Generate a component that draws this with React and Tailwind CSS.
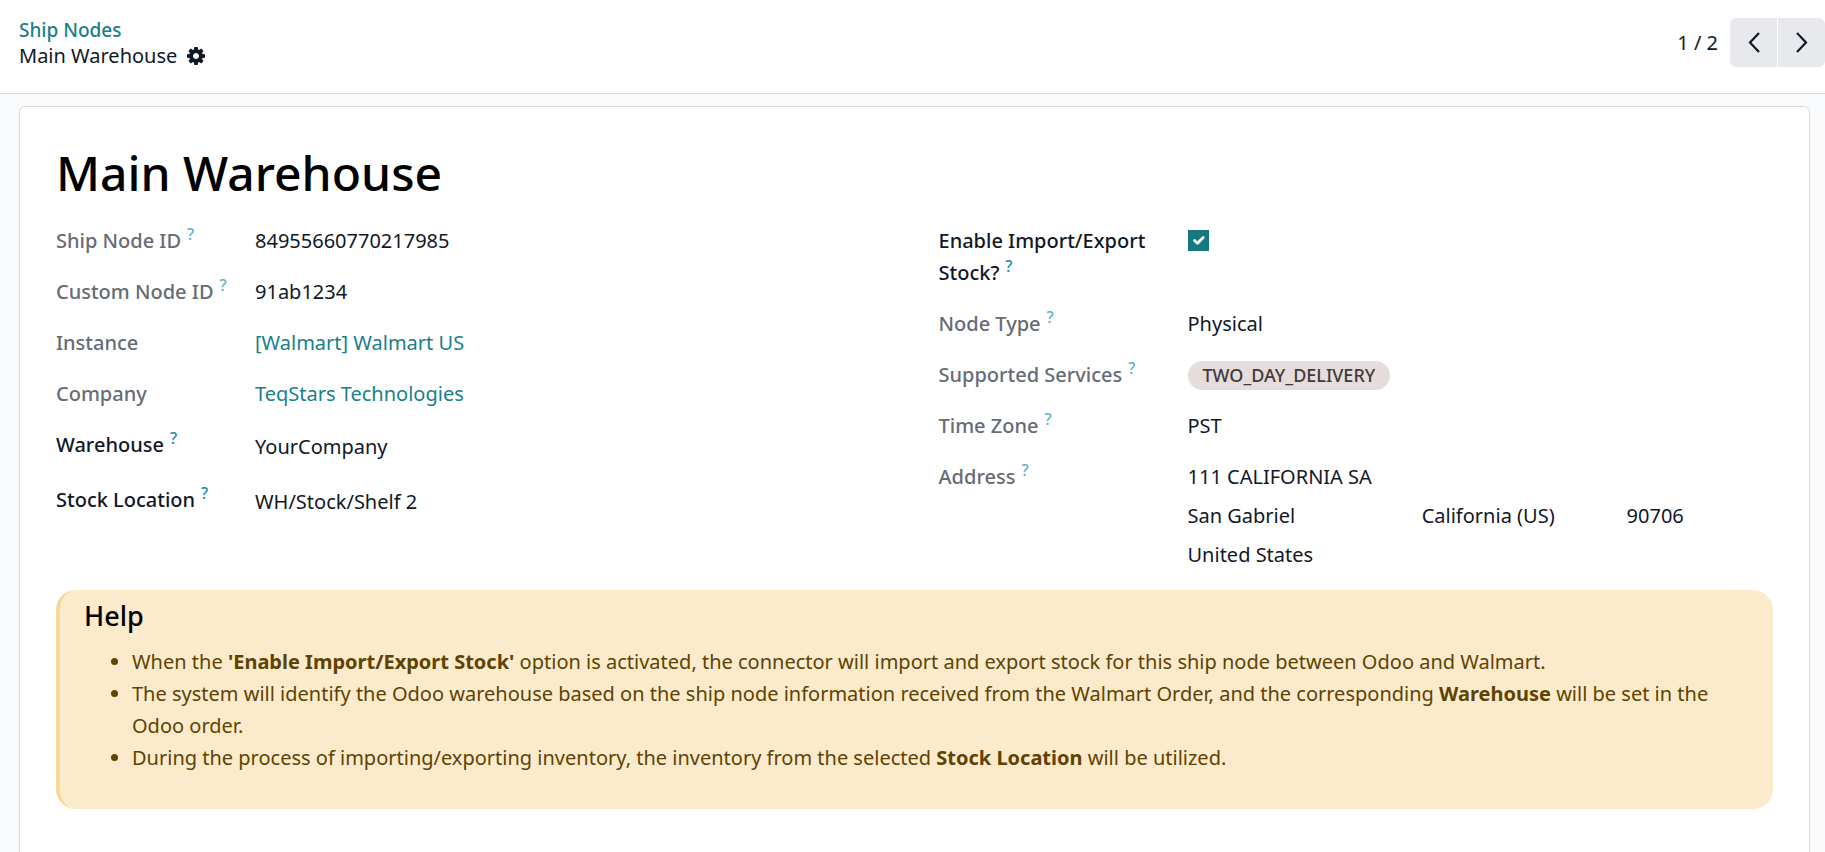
import React, { useState } from "react";

const GearIcon = () => (
  <svg viewBox="0 128 1536 1536" className="w-[18px] h-[18px]" fill="currentColor" aria-hidden="true">
    <path d="M1024 896q0-106-75-181t-181-75-181 75-75 181 75 181 181 75 181-75 75-181zm512-109v222q0 12-8 23t-20 13l-185 28q-19 54-39 91 35 50 107 138 10 12 10 25t-9 23q-27 37-99 108t-94 71q-12 0-26-9l-138-108q-44 23-91 38-16 136-29 186-7 28-36 28h-222q-14 0-24.5-8.5t-11.5-21.5l-28-184q-49-16-90-37l-141 107q-10 9-25 9-14 0-25-11-126-114-165-168-7-10-7-23 0-12 8-23 15-21 51-66.5t54-70.5q-27-50-41-99l-183-27q-13-2-21-12.5t-8-23.5v-222q0-12 8-23t19-13l186-28q14-46 39-92-40-57-107-138-10-12-10-24 0-10 9-23 26-36 98.5-107.5t94.5-71.5q13 0 26 10l138 107q44-23 91-38 16-136 29-186 7-28 36-28h222q14 0 24.5 8.5t11.5 21.5l28 184q49 16 90 37l142-107q9-9 24-9 13 0 25 10 129 119 165 170 7 8 7 22 0 12-8 23-15 21-51 66.5t-54 70.5q26 50 41 98l183 28q13 2 21 12.5t8 23.5z" />
  </svg>
);

const Chevron = ({ points }) => (
  <svg viewBox="0 0 12 21" className="w-3 h-[21px]" fill="none" stroke="currentColor" strokeWidth="2.2" aria-hidden="true">
    <polyline points={points} />
  </svg>
);

const Hint = ({ muted }) => (
  <sup className={`ml-1.5 -top-2 text-[16px] leading-none ${muted ? "text-[#5fb0c9]" : "text-[#1a8bb3]"}`}>?</sup>
);

// Label on the left, value on the right
const Field = ({ label, hint, strong, tall, htmlFor, labelWidth, children }) => {
  const Tag = htmlFor ? "label" : "div";
  return (
    <div className="flex items-start">
      <Tag
        htmlFor={htmlFor}
        className={`${labelWidth} shrink-0 pr-4 leading-8 font-medium ${strong ? "text-[#111827]" : "text-[#666b75]"}`}
      >
        {label}
        {hint && <Hint muted={!strong} />}
      </Tag>
      <div className={`flex-1 min-w-0 ${tall ? "leading-9" : "leading-8"}`}>{children}</div>
    </div>
  );
};

const LEFT = "w-[199px]";
const RIGHT = "w-[249px]";

const App = () => {
  const [enabled, setEnabled] = useState(true);

  return (
    <div className="min-h-screen flex flex-col bg-[#f9fafb] font-['Noto_Sans',sans-serif] text-[20px] text-[#111827]">
      {/* Control panel */}
      <header className="flex items-start justify-between bg-white border-b border-[#d8dadd] pt-[17px] pb-6">
        <div className="pl-[19px] leading-[26px]">
          <a href="#" className="block w-fit text-[#17808a] font-medium text-[19px]">Ship Nodes</a>
          <div className="flex items-center gap-2.5">
            <span>Main Warehouse</span>
            <button type="button" aria-label="Actions" className="cursor-pointer">
              <GearIcon />
            </button>
          </div>
        </div>
        <div className="flex items-center gap-3 pt-px">
          <span>1 / 2</span>
          <div className="flex gap-px">
            <button type="button" aria-label="Previous" className="w-[47px] h-[49px] flex items-center justify-center bg-[#e7e9ed] rounded-l-md cursor-pointer">
              <Chevron points="11,1 2,10.5 11,20" />
            </button>
            <button type="button" aria-label="Next" className="w-[47px] h-[49px] flex items-center justify-center bg-[#e7e9ed] rounded-r-md cursor-pointer">
              <Chevron points="1,1 10,10.5 1,20" />
            </button>
          </div>
        </div>
      </header>

      {/* Form sheet */}
      <main className="flex-1 flex flex-col pt-3 pl-[19px] pr-[15px]">
        <div className="flex-1 bg-white border border-b-0 border-[#d8dadd] rounded-t-md px-9 pt-9 pb-11">
          <h1 className="text-5xl leading-[60px] font-medium text-black mb-[22px]">Main Warehouse</h1>

          <div className="grid grid-cols-2 gap-12">
            <div className="flex flex-col gap-[19px]">
              <Field labelWidth={LEFT} label="Ship Node ID" hint>84955660770217985</Field>
              <Field labelWidth={LEFT} label="Custom Node ID" hint>91ab1234</Field>
              <Field labelWidth={LEFT} label="Instance">
                <a href="#" className="text-[#17808a]">[Walmart] Walmart US</a>
              </Field>
              <Field labelWidth={LEFT} label="Company">
                <a href="#" className="text-[#17808a]">TeqStars Technologies</a>
              </Field>
              <Field labelWidth={LEFT} label="Warehouse" hint strong tall>YourCompany</Field>
              <Field labelWidth={LEFT} label="Stock Location" hint strong tall>WH/Stock/Shelf 2</Field>
            </div>

            <div className="flex flex-col gap-[19px]">
              <Field labelWidth={RIGHT} label="Enable Import/Export Stock?" hint strong htmlFor="enable_stock">
                <div className="h-[30px] flex items-center">
                  <span className="relative w-[21px] h-[21px]">
                    <input
                      id="enable_stock"
                      type="checkbox"
                      checked={enabled}
                      onChange={(e) => setEnabled(e.target.checked)}
                      className="block w-[21px] h-[21px] appearance-none border border-[#17797f] checked:bg-[#17797f] cursor-pointer"
                    />
                    {enabled && (
                      <svg viewBox="0 0 21 21" className="absolute inset-0 pointer-events-none" fill="none" stroke="#fff" strokeWidth="2.8" strokeLinecap="round" strokeLinejoin="round">
                        <path d="M6.5 10.5l3 2.8 5.7-5.8" />
                      </svg>
                    )}
                  </span>
                </div>
              </Field>
              <Field labelWidth={RIGHT} label="Node Type" hint>Physical</Field>
              <Field labelWidth={RIGHT} label="Supported Services" hint>
                <div className="h-8 flex items-center">
                  <span className="px-[15px] rounded-full bg-[#e6dcdc] text-[#3f3a3b] text-[18px] leading-[29px] font-medium">
                    TWO_DAY_DELIVERY
                  </span>
                </div>
              </Field>
              <Field labelWidth={RIGHT} label="Time Zone" hint>PST</Field>
              <Field labelWidth={RIGHT} label="Address" hint>
                <div className="flex flex-col gap-[7px]">
                  <div>111 CALIFORNIA SA</div>
                  <div className="flex">
                    <span className="w-2/5">San Gabriel</span>
                    <span className="w-[35%]">California (US)</span>
                    <span>90706</span>
                  </div>
                  <div>United States</div>
                </div>
              </Field>
            </div>
          </div>

          {/* Help box */}
          <section className="mt-[19px] pt-2 pb-[35px] pl-6 pr-[50px] rounded-[20px] border-l-4 border-[#f6d999] bg-[#fbeacc] text-[#5f4300]">
            <h3 className="text-[27px] leading-9 font-medium text-black mb-3">Help</h3>
            <ul className="list-disc pl-12 leading-8">
              <li>
                When the <b>'Enable Import/Export Stock'</b> option is activated, the connector will import and export stock for this ship node between Odoo and Walmart.
              </li>
              <li>
                The system will identify the Odoo warehouse based on the ship node information received from the Walmart Order, and the corresponding <b>Warehouse</b> will be set in the Odoo order.
              </li>
              <li>
                During the process of importing/exporting inventory, the inventory from the selected <b>Stock Location</b> will be utilized.
              </li>
            </ul>
          </section>
        </div>
      </main>
    </div>
  );
};

export default App;
